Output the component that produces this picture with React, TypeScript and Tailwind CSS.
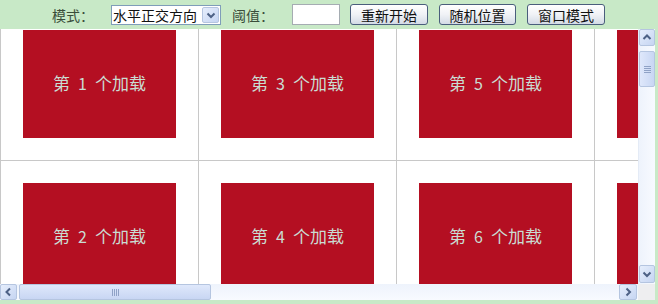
import React from "react";

const Chevron = ({ dir }: { dir: "up" | "down" | "left" | "right" }) => {
  const d =
    dir === "up"
      ? "M1.5 6 L5 2.5 L8.5 6"
      : dir === "down"
      ? "M1.5 3.5 L5 7 L8.5 3.5"
      : dir === "left"
      ? "M6 1.5 L2.5 5 L6 8.5"
      : "M3.5 1.5 L7 5 L3.5 8.5";
  return (
    <svg width="10" height="10" viewBox="0 0 10 10">
      <path d={d} fill="none" stroke="#4d6185" strokeWidth="2" />
    </svg>
  );
};

const SBtn = ({ dir, cls }: { dir: "up" | "down" | "left" | "right"; cls: string }) => (
  <div
    className={`${cls} flex items-center justify-center rounded-[2px] border border-[#b5c5e0] bg-gradient-to-br from-[#e6eefc] to-[#c6d5f2]`}
  >
    <Chevron dir={dir} />
  </div>
);

const Cell = ({ n, show }: { n: number; show: boolean }) => (
  <div className="border-l border-t border-[#c8c8c8] p-[22px] w-[198px] h-[153px]">
    <div className="w-[153px] h-[108px] pb-[3px] bg-[#b40f22] flex items-center justify-center text-[17px] text-[#cadcd2] leading-none">
      {show && (
        <>
          <span>第</span>
          <span className="w-[25px] text-center text-[16px]">{n}</span>
          <span>个加载</span>
        </>
      )}
    </div>
  </div>
);

const Btn = ({ label, w }: { label: string; w: string }) => (
  <div
    className={`${w} h-[21px] flex items-center justify-center rounded-[3px] border border-[#4a5e7c] bg-gradient-to-b from-white via-[#f0f2f6] to-[#d4dbe6] text-[14px] text-[#111] leading-none`}
  >
    {label}
  </div>
);

export default function App() {
  const nums = [1, 2, 3, 4, 5, 6, 7, 8];
  return (
    <div
      className="w-[658px] h-[304px] bg-[#c8e9c7] flex flex-col overflow-hidden"
      style={{ fontFamily: '"Noto Sans CJK SC", sans-serif' }}
    >
      {/* toolbar */}
      <div className="h-[29px] flex items-center text-[14px] leading-none">
        <span className="ml-[52px] text-[#3a4d3a]">模式：</span>
        <div className="ml-[17px] w-[110px] h-[20px] bg-white border border-[#7f9db9] flex items-center">
          <span className="pl-[1px] flex-1 text-[#111]">水平正交方向</span>
          <div className="w-[17px] h-[16px] mr-[1px] rounded-[2px] border border-[#b5c5e0] bg-gradient-to-br from-[#e6eefc] to-[#c6d5f2] flex items-center justify-center">
            <Chevron dir="down" />
          </div>
        </div>
        <span className="ml-[11px] text-[#3a4d3a]">阈值：</span>
        <div className="ml-[18px] w-[48px] h-[21px] bg-white border border-[#a5acb2]" />
        <div className="ml-[10px]">
          <Btn label="重新开始" w="w-[78px]" />
        </div>
        <div className="ml-[11px]">
          <Btn label="随机位置" w="w-[77px]" />
        </div>
        <div className="ml-[11px]">
          <Btn label="窗口模式" w="w-[78px]" />
        </div>
      </div>

      {/* scroll area */}
      <div className="w-[655px] h-[271px] flex flex-col">
        <div className="flex h-[255px]">
          <div className="w-[638px] h-[255px] overflow-hidden bg-white">
            <div className="grid grid-rows-2 grid-flow-col w-max mt-[-22px]">
              {nums.map((n) => (
                <Cell key={n} n={n} show={n <= 6} />
              ))}
            </div>
          </div>
          {/* vertical scrollbar */}
          <div className="w-[17px] h-[255px] flex flex-col bg-gradient-to-r from-[#eef3fc] to-[#f8faff] border-l border-[#e4ebf6]">
            <SBtn dir="up" cls="w-[16px] h-[17px]" />
            <div className="mt-[5px] w-[16px] h-[36px] rounded-[2px] border border-[#b5c5e0] bg-gradient-to-r from-[#dfe8fb] to-[#c8d6f3] flex flex-col items-center justify-center gap-[1px]">
              <div className="w-[7px] h-[1px] bg-[#8fa2c6]" />
              <div className="w-[7px] h-[1px] bg-[#8fa2c6]" />
              <div className="w-[7px] h-[1px] bg-[#8fa2c6]" />
              <div className="w-[7px] h-[1px] bg-[#8fa2c6]" />
            </div>
            <div className="flex-1" />
            <SBtn dir="down" cls="w-[16px] h-[18px] mb-[1px]" />
          </div>
        </div>
        <div className="flex h-[16px]">
          {/* horizontal scrollbar */}
          <div className="w-[638px] h-[16px] flex items-center bg-gradient-to-b from-[#eef3fc] to-[#f8faff]">
            <SBtn dir="left" cls="w-[17px] h-[16px]" />
            <div className="ml-[2px] w-[192px] h-[16px] rounded-[2px] border border-[#b5c5e0] bg-gradient-to-b from-[#dfe8fb] to-[#c8d6f3] flex items-center justify-center gap-[1px]">
              <div className="w-[1px] h-[7px] bg-[#8fa2c6]" />
              <div className="w-[1px] h-[7px] bg-[#8fa2c6]" />
              <div className="w-[1px] h-[7px] bg-[#8fa2c6]" />
              <div className="w-[1px] h-[7px] bg-[#8fa2c6]" />
            </div>
            <div className="flex-1" />
            <SBtn dir="right" cls="w-[18px] h-[16px] mr-[1px]" />
          </div>
          <div className="w-[17px] h-[16px] bg-[#eeeef0]" />
        </div>
      </div>
    </div>
  );
}
